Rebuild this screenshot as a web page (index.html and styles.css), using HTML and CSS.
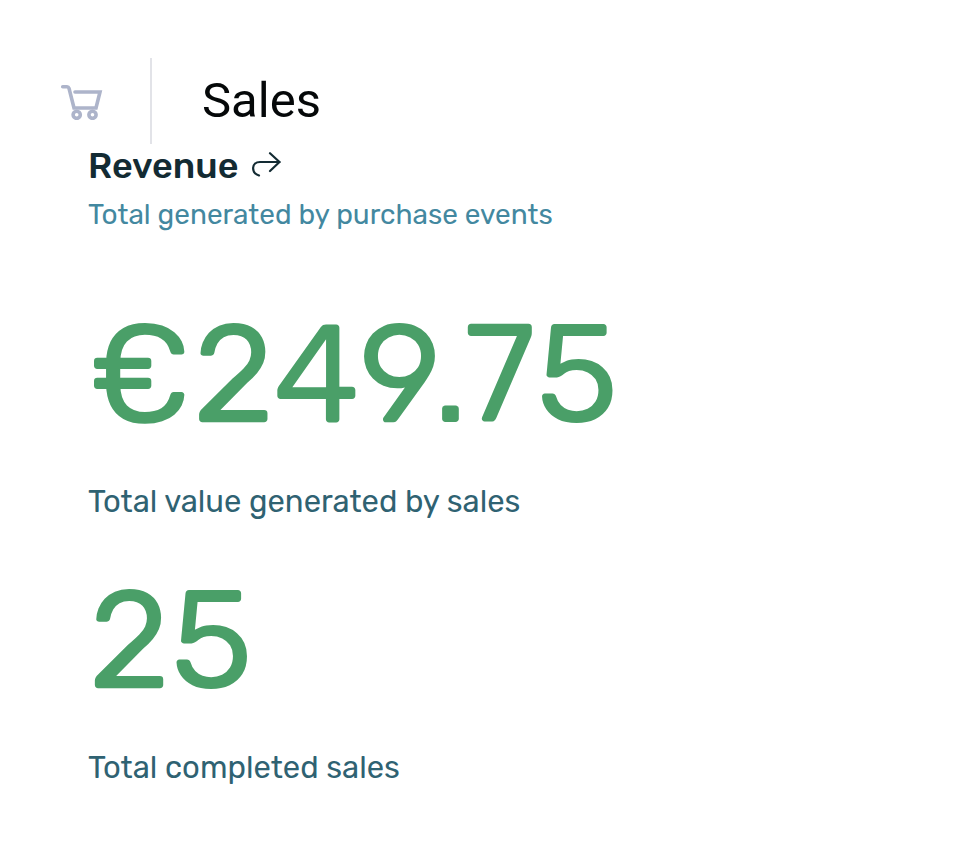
FILE: index.html
```html
<!DOCTYPE html>
<html lang="en">
<head>
  <meta charset="UTF-8">
  <meta name="viewport" content="width=device-width, initial-scale=1">
  <title>Sales</title>
  <link rel="stylesheet" href="styles.css">
</head>
<body>

  <header class="page-header">
    <div class="header-icon">
      <svg class="cart-icon" viewBox="0 0 44 38" aria-hidden="true">
        <path d="M2.700 4.700h4.300q1.500 0 2 1.500l5 19.800h22l4-16H15"/>
        <circle cx="16.700" cy="32.800" r="3.600"/>
        <circle cx="32.500" cy="32.800" r="3.600"/>
      </svg>
    </div>
    <h1 class="page-title">Sales</h1>
  </header>

  <main class="revenue">
    <h2 class="revenue-title">
      Revenue
      <svg class="arrow-icon" viewBox="0 0 30 28" aria-hidden="true">
        <path d="M8 23.500C0 21 0 10 9 10H28.500"/>
        <path d="M19 1.200l9.500 8.800-9.500 9"/>
      </svg>
    </h2>
    <p class="revenue-subtitle">Total generated by purchase events</p>

    <section class="metric">
      <p class="metric-value">€249.75</p>
      <p class="metric-label">Total value generated by sales</p>
    </section>

    <section class="metric">
      <p class="metric-value">25</p>
      <p class="metric-label">Total completed sales</p>
    </section>
  </main>

</body>
</html>
```

FILE: styles.css
```css
body {
  margin: 0;
  padding: 58px 60px;
  background: #fff;
  font-family: Rubik, Roboto, sans-serif;
}

h1, h2, p {
  margin: 0;
}

.page-header {
  display: flex;
}

.header-icon {
  display: flex;
  align-items: center;
  padding-right: 46px;
  border-right: 2px solid #e2e3e8;
}

.cart-icon {
  width: 44px;
  height: 38px;
  fill: none;
  stroke: #adb4ca;
  stroke-width: 3.6;
  stroke-linecap: round;
}

.page-title {
  padding-left: 50px;
  font-family: Roboto, sans-serif;
  font-size: 49px;
  font-weight: 400;
  line-height: 86px;
  color: #050809;
}

.revenue {
  padding-left: 28px;
}

.revenue-title {
  display: flex;
  align-items: center;
  gap: 13px;
  font-size: 36px;
  font-weight: 500;
  line-height: 44px;
  color: #132b33;
}

.arrow-icon {
  width: 30px;
  height: 28px;
  fill: none;
  stroke: #132b33;
  stroke-width: 2.2;
  stroke-linecap: round;
  stroke-linejoin: round;
}

.revenue-subtitle {
  margin: 7px 0 59px;
  font-size: 28px;
  line-height: 40px;
  color: #4388a0;
}

.metric {
  margin-bottom: 38px;
}

.metric:last-child {
  margin-bottom: 0;
}

.metric-value {
  font-size: 140px;
  line-height: 160px;
  color: #4a9f68;
}

.metric-label {
  margin-top: 28px;
  font-size: 31px;
  line-height: 40px;
  color: #2f6272;
}
```
